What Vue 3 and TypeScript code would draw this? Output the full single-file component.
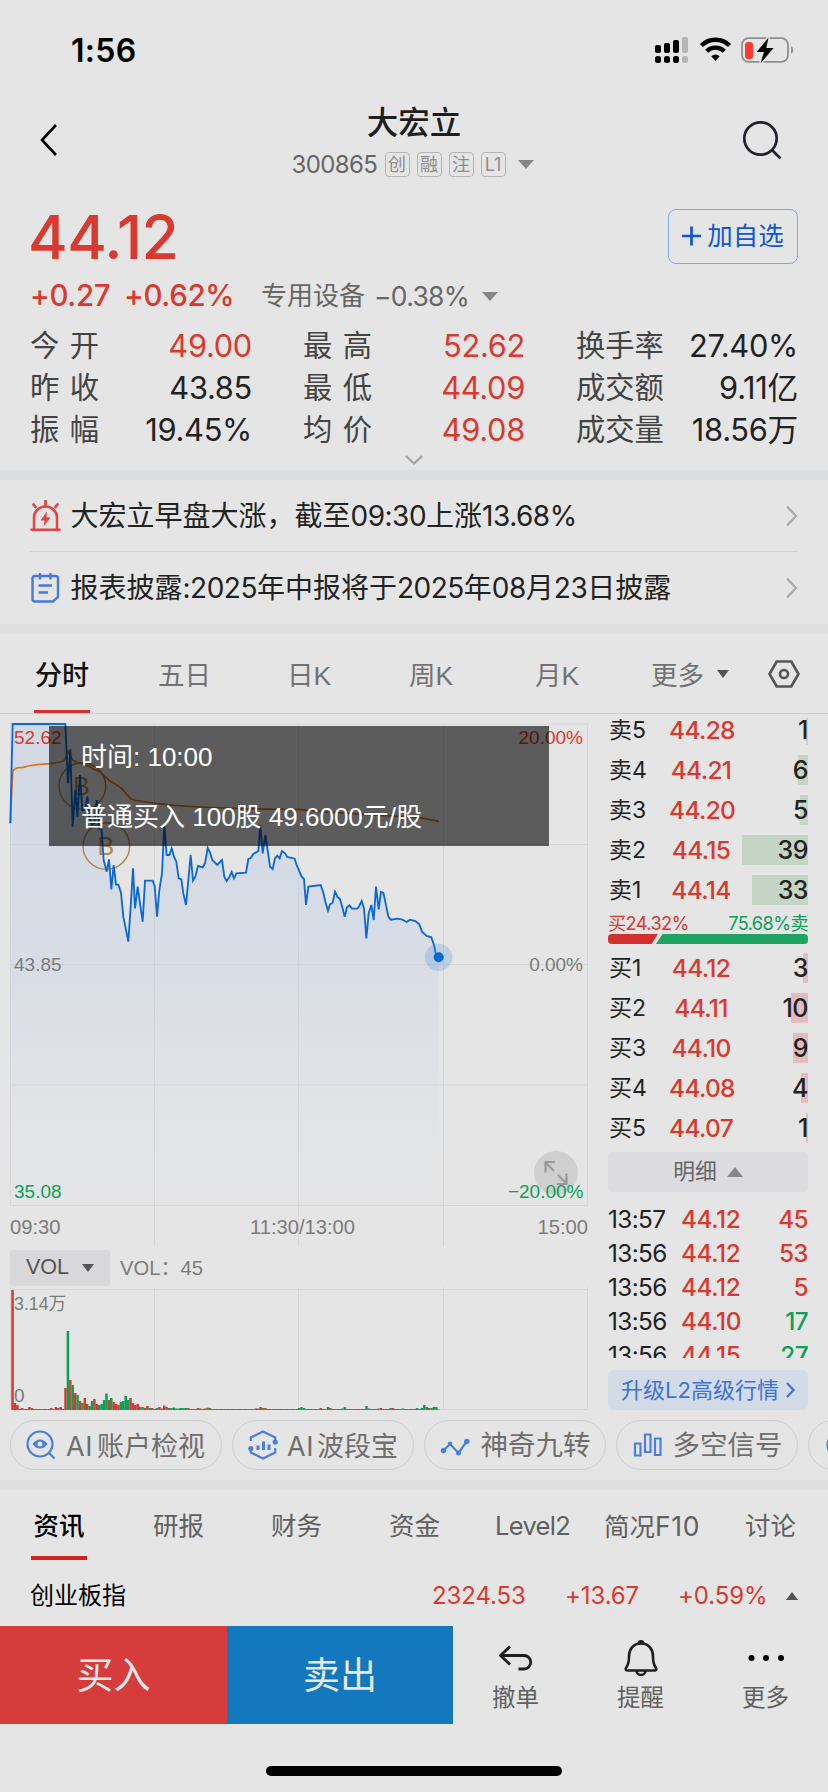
<script setup lang="ts">
interface Level { side: string; price: string; qty: number; width: number }
interface Trade { time: string; price: string; qty: number; up: boolean }

const tags: string[] = ['创', '融', '注', 'L1']

const stats = [
  { label: '今开', value: '49.00', up: true },
  { label: '最高', value: '52.62', up: true },
  { label: '换手率', value: '27.40%', up: false },
  { label: '昨收', value: '43.85', up: false },
  { label: '最低', value: '44.09', up: true },
  { label: '成交额', value: '9.11亿', up: false },
  { label: '振幅', value: '19.45%', up: false },
  { label: '均价', value: '49.08', up: true },
  { label: '成交量', value: '18.56万', up: false },
]

const sells: Level[] = [
  { side: '卖5', price: '44.28', qty: 1, width: 2 },
  { side: '卖4', price: '44.21', qty: 6, width: 10 },
  { side: '卖3', price: '44.20', qty: 5, width: 8 },
  { side: '卖2', price: '44.15', qty: 39, width: 66 },
  { side: '卖1', price: '44.14', qty: 33, width: 56 },
]
const buys: Level[] = [
  { side: '买1', price: '44.12', qty: 3, width: 5 },
  { side: '买2', price: '44.11', qty: 10, width: 17 },
  { side: '买3', price: '44.10', qty: 9, width: 15 },
  { side: '买4', price: '44.08', qty: 4, width: 7 },
  { side: '买5', price: '44.07', qty: 1, width: 2 },
]
const trades: Trade[] = [
  { time: '13:57', price: '44.12', qty: 45, up: true },
  { time: '13:56', price: '44.12', qty: 53, up: true },
  { time: '13:56', price: '44.12', qty: 5, up: true },
  { time: '13:56', price: '44.10', qty: 17, up: false },
  { time: '13:56', price: '44.15', qty: 27, up: false },
]

// Price and average samples, in thirds of a pixel from the chart's corner.
const price =
  '31,328 38,30 196,30 204,208 211,106 218,338 226,228 232,308 240,183 247,288 255,288 262,248 268,308 276,333 283,328 290,258 298,343 304,333 311,438 320,473 327,436 334,526 341,453 348,512 355,512 363,536 370,608 385,683 392,578 399,463 405,583 413,518 420,568 428,623 435,500 458,500 464,516 471,608 478,528 486,478 493,333 500,423 508,423 515,403 522,428 529,443 536,493 544,496 550,538 558,573 565,498 572,423 579,500 586,488 594,456 608,460 615,448 623,402 630,416 637,438 652,453 666,438 673,488 680,501 688,490 695,474 702,493 709,478 738,476 745,435 752,432 760,420 775,411 781,333 788,418 796,363 803,408 810,458 818,465 825,433 832,425 839,433 846,411 855,418 862,429 884,434 890,453 905,488 912,495 918,573 925,518 962,513 970,536 976,563 984,590 990,571 998,566 1005,533 1012,548 1020,555 1027,580 1034,608 1041,580 1048,574 1056,584 1072,584 1078,576 1085,561 1092,583 1099,673 1106,598 1114,573 1121,618 1128,518 1136,586 1143,534 1150,536 1157,568 1165,608 1172,617 1193,614 1207,617 1220,624 1230,617 1246,621 1258,631 1266,653 1280,666 1294,670 1302,693 1308,723 1316,730'
const fill = `31,1474 ${price} 1316,1474`
const average =
  '31,328 38,173 42,167 50,162 70,160 85,156 110,152 150,149 180,144 190,141 197,132 204,112 211,126 218,138 230,145 240,148 270,158 280,165 300,173 315,188 330,201 350,213 365,223 380,241 392,254 405,259 420,261 460,267 520,274 600,279 720,284 900,287 1000,295 1100,302 1200,307 1260,311 1316,322'

// One bar per minute: height, negative when the minute closed down.
const volumes: number[] = [
  120, 7, 5, 1, 2, 1, 1, 3, 2, 1, 1, 1, 1, 1, 1, 1, 2, 1, 3, 2, 3, 1, 22, -79, 30, -25, 17, -15, 9, -7, 12, 6, -4,
  -9, 11, 6, -5, -6, -10, -16.5, 10, -12, 8, 6, 5, -8, -9, -14, -10, 12, 7, 5, 6, -3, -3, 2, 4, -2, 2, -1, -2, 3, 1.5,
  4.5, -3, 2, -2, -2.5, -1.5, -1.5, -2, -2, -2, 2, 1, 1, 1, 2, -1.5, 1, 1.5, 2.3, -2, -1, -1, 1, -1, -1, 1, -1, 1, 1,
  -1, 1, 1, 1, -1, 1, 1, -1, 1, 1.5, 1.5, 3, -2, 2, 1, 1, -1, 1, -1, 1, -1, 1, -1, -1, 1, -1, -1, -2, -3, -2, -1, 1, 1,
  -1, 1, 1, 2, -1, 1, -3, 2, 1, -1, -1, -1, -1.5, -3, -1, 1, -1, 1, 1, 1, -1, 1, -4, -1.5, 1, -1, 1, -1.5, 2, 1, 1,
  -1, -2, 2, 1, 1, -1, -1.5, 1, -1, 1, 1, -1, -2, 1, -2, -5, -3, 2, -2, -3, -3, 0.5,
]

const mainTabs = [
  { name: '五日', at: 'w2' },
  { name: '日K', at: 'w3' },
  { name: '周K', at: 'w4' },
  { name: '月K', at: 'w5' },
]
</script>

<template>
  <main class="screen">
    <div class="status">
      <span class="clock">1:56</span>
      <svg width="142" height="30" viewBox="0 0 142 30">
        <g fill="#000">
          <rect x="1" y="10" width="6" height="8" rx="2" /><rect x="10" y="8" width="6" height="10" rx="2" />
          <rect x="19" y="5" width="6" height="13" rx="2" />
          <rect x="1" y="21" width="6" height="7" rx="2.5" /><rect x="10" y="21" width="6" height="7" rx="2.5" />
          <rect x="19" y="21" width="6" height="7" rx="2.5" />
        </g>
        <g fill="#b5b5b5"><rect x="28" y="2" width="6" height="16" rx="2" /><rect x="28" y="21" width="6" height="7" rx="2.5" /></g>
        <g fill="none" stroke="#000" stroke-width="4.4">
          <path d="M47.4 10.5a20 20 0 0 1 28.2 0" /><path d="M52.7 16.2a12.6 12.6 0 0 1 17.6 0" />
        </g>
        <path d="M57.3 21.3a6 6 0 0 1 8.400 0L61.500 26z" fill="#000" />
        <rect x="88" y="3.2" width="46" height="23.6" rx="6.5" fill="none" stroke="#8f8f8f" stroke-width="1.8" />
        <path d="M137 11v8a4.6 4.6 0 0 0 0-8" fill="#8f8f8f" />
        <rect x="91" y="7" width="8" height="17" rx="3" fill="#ff3a30" />
        <path d="M114.500 2.500 102.700 17h7.200l-3.300 11.300L119.600 13h-7.300z" fill="#000" stroke="#e5e5e5" stroke-width="3" paint-order="stroke" />
      </svg>
    </div>

    <header class="head">
      <svg class="back" width="22" height="36" viewBox="0 0 22 36"><path d="M18 3 4 18l14 15" fill="none" stroke="#000" stroke-width="2.6" /></svg>
      <div class="heading">
        <h1>大宏立</h1>
        <div class="code">
          <span class="digits">300865</span>
          <i v-for="t in tags" :key="t" class="tag">{{ t }}</i>
          <b class="tri" />
        </div>
      </div>
      <svg class="search" width="42" height="42" viewBox="0 0 42 42" fill="none" stroke="#20232c" stroke-width="2.7">
        <circle cx="19.5" cy="19.5" r="16.2" /><path d="M31 31l8.5 8.5" />
      </svg>
    </header>

    <section class="quote">
      <div class="last">
        <strong>44.12</strong>
        <button class="add">
          <svg width="19" height="20" viewBox="0 0 19 20"><path d="M0 10h19M9.500 .5v19" stroke="#0f55d6" stroke-width="2.7" /></svg>
          <span>加自选</span>
        </button>
      </div>
      <div class="change">
        <b class="chg1">+0.27</b><b class="chg2">+0.62%</b>
        <span class="ind">专用设备</span><span class="indv">−0.38%</span><b class="tri" />
      </div>
      <dl class="stats">
        <div v-for="s in stats" :key="s.label">
          <dt :class="{ wide: s.label.length === 2 }">{{ s.label }}</dt>
          <dd :class="{ up: s.up }">{{ s.value }}</dd>
        </div>
      </dl>
      <svg class="more-arrow" width="18" height="10" viewBox="0 0 18 10"><path d="M1 1l8 7.500 8-7.500" fill="none" stroke="#a3a3a3" stroke-width="2.2" /></svg>
    </section>

    <section class="news">
      <div class="item">
        <svg width="32" height="32" viewBox="0 0 32 32" fill="none" stroke="#e04545" stroke-width="2.5">
          <path d="M4 29V17.500a11.500 11 0 0 1 23 0V29M.5 29.800h30" /><path d="M15.500 1v3.500M3.500 4.500l2 2.500M27.500 4.500l-2 2.500" stroke-width="2.8" stroke-linecap="round" />
          <path d="M17 11.500l-6.500 9h4l-1 6 7-9h-4z" fill="#e04545" stroke="none" />
        </svg>
        <p>大宏立早盘大涨，截至<span class="num">09:30</span>上涨<span class="num">13.68%</span></p>
        <svg class="chev" width="12" height="22" viewBox="0 0 12 22"><path d="M1 1.500 10 11 1 20.500" fill="none" stroke="#a8a8a8" stroke-width="2.2" /></svg>
      </div>
      <div class="item second">
        <svg width="32" height="32" viewBox="0 0 32 32" fill="none" stroke="#4479e2" stroke-width="2.4">
          <path d="M4.500 4h21a2.500 2.500 0 0 1 2.500 2.500V25l-5 4.500H5A2.500 2.500 0 0 1 2.500 27V6.500A2.500 2.500 0 0 1 4.500 4zM10 1v6.500M20.500 1v6.500M8.500 13.500H22M8.500 20.500h9.500" />
        </svg>
        <p>报表披露<span class="num">:2025</span>年中报将于<span class="num">2025</span>年<span class="num">08</span>月<span class="num">23</span>日披露</p>
        <svg class="chev" width="12" height="22" viewBox="0 0 12 22"><path d="M1 1.500 10 11 1 20.500" fill="none" stroke="#a8a8a8" stroke-width="2.2" /></svg>
      </div>
    </section>

    <nav class="period">
      <span class="w1 on">分时</span>
      <span v-for="t in mainTabs" :key="t.name" :class="t.at">{{ t.name }}</span>
      <span class="w6">更多</span>
      <b class="tri small" />
      <svg class="hex" width="32" height="28" viewBox="0 0 32 28" fill="none" stroke="#555" stroke-width="2.6">
        <path d="M8.800 1.500h14.400L30.500 14l-7.300 12.500H8.800L1.500 14z" stroke-linejoin="round" /><circle cx="16" cy="14" r="4" />
      </svg>
    </nav>

    <section class="market">
      <div class="chart">
        <svg class="plot" width="598" height="536" viewBox="0 0 598 536">
          <defs>
            <linearGradient id="area" x1="0" y1="0" x2="0" y2="1">
              <stop offset="0" stop-color="#b0c2de" stop-opacity=".36" />
              <stop offset=".5" stop-color="#b8c9e6" stop-opacity=".3" />
              <stop offset="1" stop-color="#dde4f0" stop-opacity=".08" />
            </linearGradient>
          </defs>
          <g stroke="#d6d7d9" fill="none">
            <path d="M10.500 10v481.500M587.500 10v481.500M10 10h578M10 130.500h578M10 250.500h578M10 371h578M10 491.500h578" />
            <path d="M154.500 10v522M298.500 10v522M443.500 10v522" />
          </g>
          <g transform="scale(.33333)" fill="none">
            <polygon :points="fill" fill="url(#area)" />
            <g stroke="#b58550" stroke-width="4.500"><circle cx="247" cy="216" r="70" /><circle cx="319" cy="396" r="70" /></g>
            <polyline :points="average" stroke="#d97518" stroke-width="5" />
          </g>
          <g class="mark"><text x="73" y="80.500">B</text><text x="97.500" y="141">B</text></g>
          <g transform="scale(.33333)" fill="none">
            <polyline :points="price" stroke="#0c67d8" stroke-width="5.500" />
            <circle cx="1316" cy="730" r="41" fill="#4a8be0" fill-opacity=".25" />
            <circle cx="1316" cy="730" r="15" fill="#0c67d8" />
          </g>
          <g class="axis">
            <text x="14" y="30" class="r">52.62</text><text x="583" y="30" class="r end">20.00%</text>
            <text x="14" y="257">43.85</text><text x="583" y="257" class="end">0.00%</text>
          </g>
          <circle cx="556" cy="459" r="22" fill="#cfcfcf" />
          <path d="M554 457l-8.500-8.500M545.500 458.500V448h9.500M558 461l8.500 8.500M566.500 459.500V470H557" fill="none" stroke="#999" stroke-width="2.2" />
          <g class="axis">
            <text x="14" y="484" class="g">35.08</text><text x="583.500" y="484" class="g end">−20.00%</text>
            <g class="time"><text x="10" y="520">09:30</text><text x="302.500" y="520" class="mid">11:30/13:00</text><text x="588" y="520" class="end">15:00</text></g>
          </g>
        </svg>
        <div class="volhead"><span class="volbtn">VOL<b class="tri small" /></span><span class="volval">VOL：<span>45</span></span></div>
        <svg class="volplot" width="598" height="124" viewBox="0 0 598 124">
          <path d="M10.500 1v121M587.500 1v121M10 3.500h578M10 123.500h578M154.500 1v122M298.500 1v122M443.500 1v122" stroke="#d6d7d9" fill="none" />
          <rect v-for="(v, i) in volumes" :key="i" :x="11.300 + i * 2.408" :y="124 - Math.abs(v)" width="2.500" :height="Math.abs(v)" :fill="v < 0 ? '#0b9f58' : '#da3930'" />
          <g class="axis"><text x="14" y="24" class="top">3.14万</text><text x="14" y="115.500">0</text></g>
        </svg>
        <div class="tip"><p>时间: 10:00</p><p>普通买入 100股 49.6000元/股</p></div>
      </div>

      <aside class="book">
        <div class="sells">
          <div v-for="l in sells" :key="l.side" class="level">
            <span class="side">{{ l.side }}</span><span class="px">{{ l.price }}</span>
            <span class="qty">{{ l.qty }}</span><i class="bar green" :style="{ width: l.width + 'px' }" />
          </div>
        </div>
        <div class="ratio"><span class="rb">买24.32%</span><span class="rs">75.68%卖</span></div>
        <svg class="split" width="200" height="10" viewBox="0 0 200 10">
          <path d="M4 0h46l-6.500 10H4a4 4 0 0 1-4-4V4a4 4 0 0 1 4-4z" fill="#d2302f" /><path d="M54.500 0H196a4 4 0 0 1 4 4v2a4 4 0 0 1-4 4H48z" fill="#1fa362" />
        </svg>
        <div class="buys">
          <div v-for="l in buys" :key="l.side" class="level">
            <span class="side">{{ l.side }}</span><span class="px">{{ l.price }}</span>
            <span class="qty">{{ l.qty }}</span><i class="bar red" :style="{ width: l.width + 'px' }" />
          </div>
        </div>
        <div class="detail"><span>明细</span><b class="tri rise" /></div>
        <div class="trades">
          <div v-for="(t, i) in trades" :key="i" class="trade">
            <span class="tt">{{ t.time }}</span><span class="tp">{{ t.price }}</span>
            <span class="tq" :class="{ down: !t.up }">{{ t.qty }}</span>
          </div>
        </div>
        <div class="l2"><span>升级L2高级行情</span><svg width="9" height="16" viewBox="0 0 9 16"><path d="M1 1l6.500 7L1 15" fill="none" stroke="#3d72dc" stroke-width="2.2" /></svg></div>
      </aside>
    </section>

    <div class="pills">
      <div class="pill p1">
        <svg width="30" height="30" viewBox="0 0 30 30" fill="none" stroke="#4a7fdd" stroke-width="2.2">
          <circle cx="14" cy="14" r="12.500" /><path d="M22.800 22.800l5.700 5.700" /><path d="M6.500 14c4-6 11-6 15 0-4 6-11 6-15 0z" fill="#4a7fdd" stroke="none" /><circle cx="14" cy="14" r="2.500" fill="#e5e5e5" stroke="none" />
        </svg><span><em>AI</em>账户检视</span>
      </div>
      <div class="pill p2">
        <svg width="30" height="30" viewBox="0 0 30 30" fill="none" stroke="#4a7fdd" stroke-width="2.2">
          <path d="M2.800 11V7.500L15 1.500l12.200 6V12M2.800 18v4.500l12.200 6 12.200-6V18" /><path d="M10 15.500V20M15.500 11.500V20M21 14.500V20" stroke-width="3" /><g fill="#4a7fdd" stroke="none"><circle cx="2.800" cy="18.500" r="2.600" /><circle cx="27.200" cy="12" r="2.600" /></g>
        </svg><span><em>AI</em>波段宝</span>
      </div>
      <div class="pill p3">
        <svg width="30" height="30" viewBox="0 0 30 30" fill="none" stroke="#4a7fdd" stroke-width="2.200">
          <path d="M3.500 20.500 10 14l8.500 9L27 11" /><g fill="#4a7fdd" stroke="none"><circle cx="3.500" cy="20.500" r="2.700" /><circle cx="10" cy="13.800" r="2.200" /><circle cx="18.500" cy="23" r="2.500" /><circle cx="26.800" cy="11.500" r="2.700" /></g>
        </svg><span>神奇九转</span>
      </div>
      <div class="pill p4">
        <svg width="30" height="30" viewBox="0 0 30 30" fill="none" stroke="#4a7fdd" stroke-width="2.2">
          <path d="M3 13.500h5.500v12H3zM13 4.500h5.500v17.500H13zM23 8.500h5.500v16.500H23z" />
        </svg><span>多空信号</span>
      </div>
      <div class="pill p5"><svg width="30" height="30" viewBox="0 0 30 30"><circle cx="16" cy="15" r="12.500" fill="none" stroke="#4a7fdd" stroke-width="2.2" /></svg></div>
    </div>

    <nav class="info">
      <span class="i1 on">资讯</span><span class="i2">研报</span><span class="i3">财务</span><span class="i4">资金</span>
      <span class="i5">Level2</span><span class="i6">简况<em>F10</em></span><span class="i7">讨论</span>
    </nav>

    <div class="index">
      <span class="iname">创业板指</span><span class="v1">2324.53</span><span class="v2">+13.67</span><span class="v3">+0.59%</span><b class="tri rise tiny" />
    </div>

    <footer class="actions">
      <button class="buy">买入</button>
      <button class="sell">卖出</button>
      <div class="act">
        <svg width="40" height="40" viewBox="0 0 40 40" fill="none" stroke="#1f1f1f" stroke-width="2.800" stroke-linejoin="round"><path d="M14 8.500 4.500 17.500l9.500 9M4.500 17.500H28a6.500 6.500 0 0 1 0 13.500H22.500" /></svg>
        <span>撤单</span>
      </div>
      <div class="act">
        <svg width="40" height="40" viewBox="0 0 40 40" fill="none" stroke="#1f1f1f" stroke-width="2.600" stroke-linejoin="round"><path d="M20 5.500c-8 0-12 6-12 13 0 8-1.500 9-3 11.500-.8 1.500 0 2.500 1.500 2.500h27c1.500 0 2.300-1 1.500-2.500-1.500-2.500-3-3.500-3-11.500 0-7-4-13-12-13zM17.500 5.500a2.600 3 0 0 1 5 0M15.500 32.500a4.500 4.500 0 0 0 9 0" /></svg>
        <span>提醒</span>
      </div>
      <div class="act">
        <svg width="40" height="40" viewBox="0 0 40 40"><circle cx="5.500" cy="20" r="3" /><circle cx="20" cy="20" r="3" /><circle cx="35" cy="20" r="3" /></svg>
        <span>更多</span>
      </div>
    </footer>
    <div class="home"><i /></div>
  </main>
</template>

<style>
body { background: #e5e5e5; }
</style>

<style scoped>
.screen {
  width: 828px; height: 1792px; overflow: hidden; display: flex; flex-direction: column;
  background: #e5e5e5; color: #222;
  font-family: Inter, "Noto Sans CJK SC", sans-serif; line-height: 1;
}
.screen > * { flex: none; box-sizing: border-box; }
p, h1, dl, dd { margin: 0; }
i, em { font-style: normal; }
span, dt, dd, p, strong { white-space: nowrap; }
button { border: 0; background: none; padding: 0; font: inherit; line-height: 1; box-sizing: border-box; }
.tri { width: 0; height: 0; flex: none; border: solid transparent; border-width: 9px 8px 0; border-top-color: #868686; }
.tri.small { border-width: 8px 6px 0; border-top-color: #555; }
.tri.rise { border-width: 0 8px 10px; border-bottom-color: #868886; }
.tri.tiny { border-width: 0 6px 8px; border-bottom-color: #555; }

.status { height: 100px; padding: 35px 32px 0 71px; display: flex; justify-content: space-between; align-items: flex-start; }
.clock { font-size: 32px; font-weight: 600; color: #000; letter-spacing: .3px; line-height: 31px; }

.head { height: 90px; padding: 0 45px 0 38px; display: flex; justify-content: space-between; align-items: flex-start; }
.back { margin-top: 22px; }
.search { margin-top: 19px; }
.heading { width: 260px; margin-left: 42px; display: flex; flex-direction: column; padding-top: 1px; }
h1 { font-size: 31.500px; font-weight: 500; text-align: center; margin-left: -15px; color: #1e1e1e; line-height: 44px; }
.code { display: flex; align-items: center; height: 39px; }
.digits { font-size: 24px; color: #666; width: 93px; letter-spacing: -.6px; }
.tag { box-sizing: border-box; width: 25px; height: 25px; border: 1.500px solid #b4b4b4; border-radius: 4px; margin-right: 7px; display: grid; place-items: center; font-size: 18px; color: #8d8d8d; }
.code .tri { margin-left: 5px; }

.quote { height: 280px; padding: 0 30px; }
.last { height: 83px; display: flex; justify-content: space-between; align-items: center; }
strong { font-size: 60.500px; font-weight: 500; color: #d9392e; letter-spacing: -.5px; margin: 11px 0 0 -2px; }
.add { width: 130px; height: 55px; margin-top: 9px; border: 1.500px solid #85a6e0; border-radius: 8px; display: flex; align-items: center; justify-content: center; gap: 6px; color: #0f55d6; font-size: 25.500px; }
.change { height: 44px; padding-top: 2px; box-sizing: border-box; display: flex; align-items: center; color: #d9392e; }
.chg1, .chg2 { font-size: 29.500px; font-weight: 500; letter-spacing: -.3px; }
.chg1 { width: 94px; }
.chg2 { width: 137px; }
.ind { font-size: 26px; color: #676767; width: 113px; }
.indv { font-size: 26.500px; color: #676767; width: 108px; letter-spacing: -.7px; }
.stats { display: grid; grid-template-columns: 222px 222px 222px; column-gap: 51px; grid-auto-rows: 42px; margin-top: 8px; }
.stats div { display: flex; justify-content: space-between; align-items: center; }
dt { font-size: 29.300px; color: #444; }
dt.wide { letter-spacing: 10.500px; }
dd { font-size: 30.800px; letter-spacing: -.3px; color: #222; }
dd.up { color: #d9392e; }
.more-arrow { display: block; margin: 4px auto 0; }

.news { height: 164px; border-top: 10px solid #dcdde0; border-bottom: 10px solid #dfdfdf; padding: 0 30px; }
.item { height: 72px; display: flex; align-items: center; border-bottom: 1px solid #d4d4d4; box-sizing: border-box; }
.item.second { border: 0; }
.item p { font-size: 28px; color: #222; margin-left: 8.500px; flex: 1; }
.item .num { letter-spacing: -.5px; }

.period { height: 80px; padding-left: 34px; display: flex; align-items: center; border-bottom: 1px solid #cfcfcf; font-size: 26.500px; color: #727272; font-family: "Liberation Sans", "Noto Sans CJK SC", sans-serif; }
.period span { height: 79px; line-height: 84px; box-sizing: border-box; }
.period .on { width: 56px; text-align: center; color: #111; font-size: 27px; font-weight: 500; border-bottom: 3px solid #d2302f; }
.w1 { margin-right: 68px; }
.w2 { width: 129px; }
.w3 { width: 122px; }
.w4 { width: 126px; }
.w5 { width: 116px; }
.w6 { width: 66px; }
.hex { margin-left: 39px; }

.market { height: 696px; display: flex; }
.chart { width: 608px; position: relative; }
.plot, .volplot { display: block; }
.axis { font: 19px "Liberation Sans", "Noto Sans CJK SC", sans-serif; fill: #7c7c7c; }
.axis .time { font-size: 20.200px; }
.axis .top { font-size: 17.800px; }
.axis .end { text-anchor: end; }
.axis .mid { text-anchor: middle; }
.axis .r { fill: #d9392e; }
.axis .g { fill: #0b9f58; }
.mark { font: 25px "Liberation Sans", sans-serif; fill: #b58550; }
.volhead { height: 36px; display: flex; align-items: center; padding-left: 10px; font-family: "Liberation Sans", "Noto Sans CJK SC", sans-serif; font-size: 20.200px; color: #7c7c7c; }
.volbtn { box-sizing: border-box; width: 100px; height: 36px; background: #d8d8da; border-radius: 4px; padding-left: 16px; display: flex; align-items: center; font-size: 21.500px; color: #555; }
.volbtn .tri { margin-left: 13px; }
.volval { margin-left: 10px; }
.tip { position: absolute; left: 49px; top: 12px; box-sizing: border-box; width: 500px; height: 120px; padding: 1px 0 0 32px; background: rgba(0, 0, 0, .6); color: #fff; font: 26px/60px "Liberation Sans", "Noto Sans CJK SC", sans-serif; }

.book { width: 200px; display: flex; flex-direction: column; }
.sells { margin-top: 4px; height: 196px; overflow: hidden; display: flex; flex-direction: column; justify-content: flex-end; }
.level { position: relative; height: 40px; flex: none; display: flex; align-items: center; }
.sells .level { box-sizing: border-box; padding-bottom: 7px; }
.side { width: 61px; font-size: 23px; padding-left: 1px; box-sizing: border-box; }
.px { width: 64px; text-align: center; font-size: 24.500px; font-weight: 500; color: #d9392e; letter-spacing: -.7px; }
.qty { flex: 1; text-align: right; font-size: 25px; font-weight: 500; position: relative; z-index: 1; letter-spacing: -.5px; }
.bar { position: absolute; right: 0; top: 1px; height: 30px; }
.bar.green { background: #c4d4c5; }
.bar.red { background: #e2bdbe; }
.ratio { height: 20px; display: flex; justify-content: space-between; align-items: center; font-size: 18.200px; letter-spacing: -.6px; padding-bottom: 2px; box-sizing: border-box; }
.rb { color: #d9392e; }
.rs { color: #0b9f58; }
.split { display: block; }
.buys { margin-top: 4px; height: 204px; }
.buys .bar { top: 5px; }
.detail { height: 40px; background: #dcdce0; border-radius: 6px; display: flex; align-items: center; justify-content: center; gap: 10px; font-size: 21.800px; color: #666; }
.trades { margin-top: 10px; height: 156px; overflow: hidden; }
.trade { height: 34px; display: flex; align-items: center; font-size: 24.300px; letter-spacing: -.6px; }
.tt { width: 73px; }
.tp { width: 60px; font-weight: 500; color: #d9392e; letter-spacing: -.4px; }
.tq { flex: 1; text-align: right; font-weight: 500; color: #d9392e; }
.tq.down { color: #0b9f58; }
.l2 { margin-top: 12px; height: 40px; background: #d2dbe6; border-radius: 6px; display: flex; align-items: center; justify-content: center; gap: 7px; font-size: 22px; color: #3d72dc; }

.pills { height: 80px; border-bottom: 10px solid #dfdfdf; padding: 10px 0 0 10px; display: flex; gap: 10px; overflow: hidden; }
.pill { flex: none; height: 50px; box-sizing: border-box; border: 1.500px solid #d0d0d0; border-radius: 25px; display: flex; align-items: center; font-size: 27.500px; color: #6f6f6f; padding-left: 15px; }
.pill em { letter-spacing: .5px; margin-right: 3px; }
.pill span { margin-left: 10.500px; padding-top: 2px; }
.p1, .p2 { font-size: 27px; }
.p1 span { margin-left: 10px; }
.p1 em { margin-right: 4px; }
.p2 span { margin-left: 9px; }
.p1 { width: 212px; }
.p2, .p3, .p4, .p5 { width: 182px; }

.info { height: 72px; padding-left: 31px; display: flex; font-size: 25.500px; color: #606060; }
.info span { line-height: 72px; height: 70px; box-sizing: border-box; }
.info .on { width: 56px; text-align: center; color: #000; font-weight: 500; border-bottom: 4px solid #d2211e; }
.i1 { margin-right: 66px; }
.i2, .i3 { width: 118px; }
.i4 { width: 106px; }
.i5 { width: 109px; letter-spacing: -.7px; }
.i6 { width: 141px; }
.i6 em { font-size: 26.500px; letter-spacing: .7px; }

.index { height: 64px; padding: 4px 30px 0; display: flex; align-items: center; font-size: 24px; }
.iname { width: 402px; color: #000; }
.v1, .v2, .v3 { color: #d9392e; letter-spacing: -.1px; }
.v1 { width: 133px; }
.v2 { width: 113px; }
.v3 { width: 108px; }

.actions { height: 98px; display: flex; }
.buy, .sell { width: 227px; background: #d63c3c; color: #e9e9e9; font-size: 37px; }
.sell { width: 226px; background: #1478be; }
.act { flex: 1; display: flex; flex-direction: column; align-items: center; padding-top: 12px; gap: 8px; font-size: 23.500px; color: #606060; }
.home { height: 68px; padding-top: 42px; display: flex; justify-content: center; }
.home i { width: 296px; height: 10px; border-radius: 5px; background: #000; }
</style>
